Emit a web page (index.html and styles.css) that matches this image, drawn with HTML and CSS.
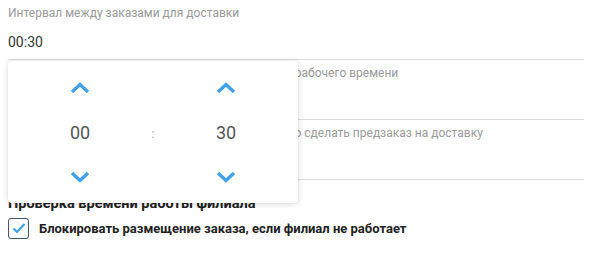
FILE: index.html
```html
<!DOCTYPE html>
<html lang="ru">
<head>
<meta charset="utf-8">
<link rel="stylesheet" href="styles.css">
</head>
<body>
<div class="page">
  <div class="field">
    <div class="field-label">Интервал между заказами для доставки</div>
    <div class="field-value">00:30</div>
    <div class="picker">
      <div class="picker-col">
        <button class="chev"><svg width="20" height="12" viewBox="0 0 20 12"><path d="M2 10 L10 2.5 L18 10" fill="none" stroke="#42a1e8" stroke-width="3.4"/></svg></button>
        <div class="picker-num">00</div>
        <button class="chev"><svg width="20" height="12" viewBox="0 0 20 12"><path d="M2 2 L10 9.5 L18 2" fill="none" stroke="#42a1e8" stroke-width="3.4"/></svg></button>
      </div>
      <div class="picker-sep">:</div>
      <div class="picker-col">
        <button class="chev"><svg width="20" height="12" viewBox="0 0 20 12"><path d="M2 10 L10 2.5 L18 10" fill="none" stroke="#42a1e8" stroke-width="3.4"/></svg></button>
        <div class="picker-num">30</div>
        <button class="chev"><svg width="20" height="12" viewBox="0 0 20 12"><path d="M2 2 L10 9.5 L18 2" fill="none" stroke="#42a1e8" stroke-width="3.4"/></svg></button>
      </div>
    </div>
  </div>
  <div class="field">
    <div class="field-label">Время прекращения приёма заказов до закрытия рабочего времени</div>
    <div class="field-value">00:30</div>
  </div>
  <div class="field">
    <div class="field-label">Максимальное количество дней, на которое можно сделать предзаказ на доставку</div>
    <div class="field-value">7</div>
  </div>
  <h3 class="section-title">Проверка времени работы филиала</h3>
  <label class="check-row">
    <span class="checkbox"><svg width="14" height="12" viewBox="0 0 14 12"><path d="M1.5 6.5 L5 10 L12.5 2" fill="none" stroke="#42a1e8" stroke-width="2.2"/></svg></span>
    <span class="check-text">Блокировать размещение заказа, если филиал не работает</span>
  </label>
  <div class="next-label">Настройки отображения времени доставки для клиента в приложении</div>
</div>
</body>
</html>
```

FILE: styles.css
```css
* { box-sizing: border-box; }
html, body { margin: 0; padding: 0; background: #fff; }
body { font-family: Roboto, "Noto Sans", sans-serif; color: #333; overflow: hidden; }
.page { padding: 0 16px 0 8px; }
.field {
  position: relative;
  padding: 6px 0 7px;
  border-bottom: 1px solid #dcdcdc;
  height: 60px;
}
.field-label {
  font-size: 12px;
  line-height: 14px;
  color: #9a9a9a;
  white-space: nowrap;
}
.field-value {
  margin-top: 12px;
  font-size: 14px;
  line-height: 20px;
  color: #333;
}
.picker {
  position: absolute;
  left: 0;
  top: 61px;
  width: 290px;
  height: 142px;
  background: #fff;
  border-radius: 4px;
  box-shadow: 0 1px 6px rgba(0,0,0,0.16), 0 0 1px rgba(0,0,0,0.08);
  z-index: 5;
  display: grid;
  grid-template-columns: 120px 26px 120px;
  padding: 0 12px;
}
.picker-col {
  display: flex;
  flex-direction: column;
  align-items: center;
  padding-top: 21px;
}
.chev {
  border: 0;
  background: none;
  padding: 0;
  width: 20px;
  height: 12px;
  display: block;
}
.chev svg { display: block; }
.picker-num {
  font-size: 18px;
  line-height: 24px;
  color: #555;
  margin: 27px 0 26px;
}
.picker-sep {
  text-align: center;
  font-size: 12px;
  color: #aaa;
  padding-top: 66px;
}
.section-title {
  margin: 14px 0 0;
  font-size: 14.5px;
  line-height: 20px;
  font-weight: 700;
  color: #222;
}
.check-row {
  display: flex;
  align-items: center;
  gap: 10px;
  margin-top: 3px;
  height: 22px;
}
.checkbox {
  width: 21px;
  height: 21px;
  flex: none;
  border: 1.5px solid #3e5570;
  border-radius: 3px;
  display: flex;
  align-items: center;
  justify-content: center;
}
.check-text {
  font-size: 13px;
  font-weight: 700;
  color: #222;
}
.next-label {
  margin-top: 21px;
  font-size: 12px;
  line-height: 14px;
  color: #9a9a9a;
}
```
